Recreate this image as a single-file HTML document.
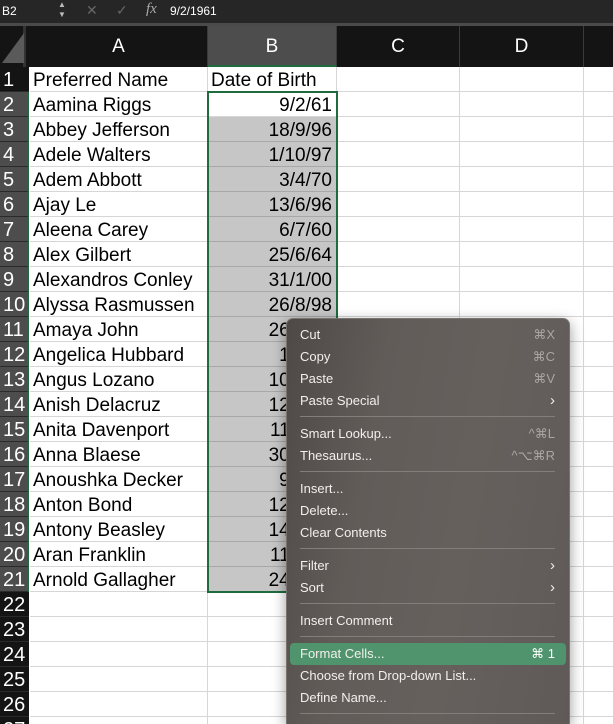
<!DOCTYPE html>
<html style="overflow:hidden;width:613px;height:724px"><head><meta charset="utf-8"><style>
*{margin:0;padding:0;box-sizing:border-box}
body{width:613px;height:724px;overflow:hidden;background:#fff;font-family:"Liberation Sans",Arial,sans-serif;position:relative}
.tb{position:absolute;left:0;top:0;width:613px;height:23px;background:#262626;color:#fff;font-size:12px}
.hdr{position:absolute;left:0;top:26px;width:613px;height:41px;background:#141414;color:#fff;font-size:19px}
.gap{position:absolute;left:0;top:23px;width:613px;height:3px;background:#4a4a4a}
.ch{position:absolute;top:0;height:41px;line-height:41px;text-align:center;border-right:1px solid #3a3a3a}
.rh{position:absolute;left:0;width:29px;height:25px;line-height:27px;color:#fff;font-size:20px;padding-left:3px;background:#141414;border-bottom:1px solid #2a2a2a}
.rh.s{background:#4d4d4d;border-right:2px solid #1e6b3e}
.c{position:absolute;height:25px;line-height:27px;font-size:19px;color:#000;border-bottom:1px solid #d6d6d6;border-right:1px solid #d6d6d6;white-space:nowrap;overflow:hidden}
.a{left:30px;width:178px;padding-left:3px}
.b{left:208px;width:129px;text-align:right;padding-right:4px}
.g{background:#c6c6c6;border-bottom-color:#a8a8a8}
.sel{position:absolute;left:207px;top:91px;width:131px;height:502px;border:2px solid #1e6b3e}
.menu{position:absolute;left:286px;top:318px;width:284px;height:406px;border-radius:7px 7px 0 0;background:linear-gradient(100deg,#4e4946 0%,#625c59 30%,#66605d 60%,#5f5a58 100%);border:1px solid #7a7470;border-bottom:none;box-shadow:0 4px 14px rgba(0,0,0,.4);color:#f2efed;font-size:13px;overflow:hidden}
.mi{position:absolute;left:13px;right:14px;height:22px;line-height:22px}
.mi .k{position:absolute;right:0;top:0;color:#aaa5a2;font-size:13px}
.mi .ar{position:absolute;right:0;top:0;color:#eee;font-size:15px}
.sep{position:absolute;left:13px;right:14px;height:1px;background:#847e7b}
.hl{position:absolute;left:3px;right:3px;top:324px;height:22px;background:#4f946c;border-radius:4px}
</style></head><body>
<div class="tb">
<span style="position:absolute;left:2px;top:4px">B2</span>
<span style="position:absolute;left:58px;top:0;font-size:8px;color:#bbb;line-height:10px">▲<br>▼</span>
<span style="position:absolute;left:86px;top:2px;color:#666;font-size:14px">✕</span>
<span style="position:absolute;left:116px;top:2px;color:#666;font-size:14px">✓</span>
<span style="position:absolute;left:146px;top:1px;color:#aaa;font-family:'Liberation Serif',serif;font-style:italic;font-size:15px">fx</span>
<span style="position:absolute;left:170px;top:4px;color:#fff">9/2/1961</span>
</div>
<div class="gap"></div>
<div class="hdr">
<div style="position:absolute;left:0;top:0;width:26px;height:41px;background:#141414;border-right:3px solid #333"><div style="position:absolute;left:2px;bottom:4px;width:0;height:0;border-left:22px solid transparent;border-bottom:30px solid #5a5a5a"></div></div>
<div class="ch" style="left:30px;width:178px">A</div>
<div class="ch" style="left:208px;width:129px;background:#4d4d4d;border-bottom:2px solid #1e6b3e">B</div>
<div class="ch" style="left:337px;width:123px">C</div>
<div class="ch" style="left:460px;width:124px">D</div>
</div>

<div class="rh" style="top:67px">1</div>
<div class="rh s" style="top:92px">2</div><div class="rh s" style="top:117px">3</div><div class="rh s" style="top:142px">4</div><div class="rh s" style="top:167px">5</div><div class="rh s" style="top:192px">6</div><div class="rh s" style="top:217px">7</div><div class="rh s" style="top:242px">8</div><div class="rh s" style="top:267px">9</div><div class="rh s" style="top:292px">10</div><div class="rh s" style="top:317px">11</div><div class="rh s" style="top:342px">12</div><div class="rh s" style="top:367px">13</div><div class="rh s" style="top:392px">14</div><div class="rh s" style="top:417px">15</div><div class="rh s" style="top:442px">16</div><div class="rh s" style="top:467px">17</div><div class="rh s" style="top:492px">18</div><div class="rh s" style="top:517px">19</div><div class="rh s" style="top:542px">20</div><div class="rh s" style="top:567px">21</div>
<div class="rh" style="top:592px">22</div><div class="rh" style="top:617px">23</div><div class="rh" style="top:642px">24</div><div class="rh" style="top:667px">25</div><div class="rh" style="top:692px">26</div><div class="rh" style="top:717px">27</div>

<div class="c a" style="top:67px">Preferred Name</div><div class="c b" style="top:67px;text-align:left;padding-left:3px">Date of Birth</div>
<div class="c a" style="top:92px">Aamina Riggs</div><div class="c b" style="top:92px">9/2/61</div>
<div class="c a" style="top:117px">Abbey Jefferson</div><div class="c b g" style="top:117px">18/9/96</div>
<div class="c a" style="top:142px">Adele Walters</div><div class="c b g" style="top:142px">1/10/97</div>
<div class="c a" style="top:167px">Adem Abbott</div><div class="c b g" style="top:167px">3/4/70</div>
<div class="c a" style="top:192px">Ajay Le</div><div class="c b g" style="top:192px">13/6/96</div>
<div class="c a" style="top:217px">Aleena Carey</div><div class="c b g" style="top:217px">6/7/60</div>
<div class="c a" style="top:242px">Alex Gilbert</div><div class="c b g" style="top:242px">25/6/64</div>
<div class="c a" style="top:267px">Alexandros Conley</div><div class="c b g" style="top:267px">31/1/00</div>
<div class="c a" style="top:292px">Alyssa Rasmussen</div><div class="c b g" style="top:292px">26/8/98</div>
<div class="c a" style="top:317px">Amaya John</div><div class="c b g" style="top:317px">26/8/98</div>
<div class="c a" style="top:342px">Angelica Hubbard</div><div class="c b g" style="top:342px">1/1/98</div>
<div class="c a" style="top:367px">Angus Lozano</div><div class="c b g" style="top:367px">10/1/98</div>
<div class="c a" style="top:392px">Anish Delacruz</div><div class="c b g" style="top:392px">12/1/98</div>
<div class="c a" style="top:417px">Anita Davenport</div><div class="c b g" style="top:417px">11/1/98</div>
<div class="c a" style="top:442px">Anna Blaese</div><div class="c b g" style="top:442px">30/1/98</div>
<div class="c a" style="top:467px">Anoushka Decker</div><div class="c b g" style="top:467px">9/1/98</div>
<div class="c a" style="top:492px">Anton Bond</div><div class="c b g" style="top:492px">12/1/98</div>
<div class="c a" style="top:517px">Antony Beasley</div><div class="c b g" style="top:517px">14/1/98</div>
<div class="c a" style="top:542px">Aran Franklin</div><div class="c b g" style="top:542px">11/1/98</div>
<div class="c a" style="top:567px">Arnold Gallagher</div><div class="c b g" style="top:567px">24/1/98</div>
<div class="c a" style="top:592px"></div><div class="c b" style="top:592px"></div>
<div class="c a" style="top:617px"></div><div class="c b" style="top:617px"></div>
<div class="c a" style="top:642px"></div><div class="c b" style="top:642px"></div>
<div class="c a" style="top:667px"></div><div class="c b" style="top:667px"></div>
<div class="c a" style="top:692px"></div><div class="c b" style="top:692px"></div>
<div class="c a" style="top:717px"></div><div class="c b" style="top:717px"></div>

<div style="position:absolute;left:337px;top:67px;width:276px;height:657px;background:
repeating-linear-gradient(to bottom,transparent 0,transparent 24px,#d6d6d6 24px,#d6d6d6 25px)"></div>
<div style="position:absolute;left:459px;top:67px;width:1px;height:657px;background:#d6d6d6"></div>
<div style="position:absolute;left:583px;top:67px;width:1px;height:657px;background:#d6d6d6"></div>

<div class="sel"></div>

<div class="menu">
<div class="mi" style="top:5px">Cut<span class="k">⌘X</span></div>
<div class="mi" style="top:27px">Copy<span class="k">⌘C</span></div>
<div class="mi" style="top:49px">Paste<span class="k">⌘V</span></div>
<div class="mi" style="top:71px">Paste Special<span class="ar">›</span></div>
<div class="sep" style="top:97px"></div>
<div class="mi" style="top:104px">Smart Lookup...<span class="k">^⌘L</span></div>
<div class="mi" style="top:126px">Thesaurus...<span class="k">^⌥⌘R</span></div>
<div class="sep" style="top:152px"></div>
<div class="mi" style="top:159px">Insert...</div>
<div class="mi" style="top:181px">Delete...</div>
<div class="mi" style="top:203px">Clear Contents</div>
<div class="sep" style="top:229px"></div>
<div class="mi" style="top:236px">Filter<span class="ar">›</span></div>
<div class="mi" style="top:258px">Sort<span class="ar">›</span></div>
<div class="sep" style="top:284px"></div>
<div class="mi" style="top:291px">Insert Comment</div>
<div class="sep" style="top:317px"></div>
<div class="hl"></div>
<div class="mi" style="top:324px">Format Cells...<span class="k" style="color:#fff">⌘ 1</span></div>
<div class="mi" style="top:346px">Choose from Drop-down List...</div>
<div class="mi" style="top:368px">Define Name...</div>
<div class="sep" style="top:394px"></div>
</div>
</body></html>
